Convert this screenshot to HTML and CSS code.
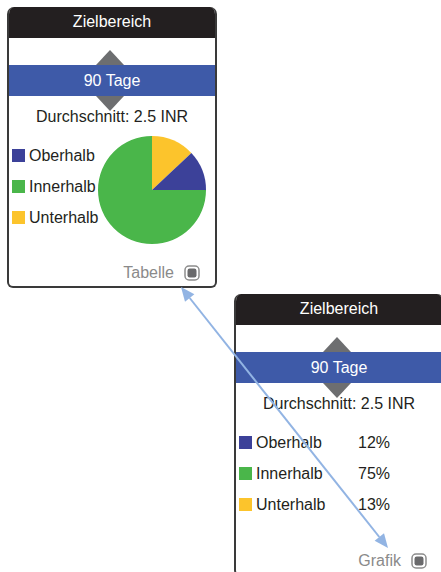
FILE: index.html
```html
<!DOCTYPE html>
<html>
<head>
	<title>Zielbereich</title>
	<link rel="stylesheet" href="styles.css">
</head>
<body>
	<div class="card card-chart">
		<div class="card-head">Zielbereich</div>
		<div class="spinner">
			<div class="tri tri-up"></div>
			<div class="band">90 Tage</div>
			<div class="tri tri-down"></div>
		</div>
		<div class="avg">Durchschnitt: 2.5 INR</div>
		<div class="card-body">
			<div class="legend">
				<div class="row"><span class="swatch above"></span><span class="name">Oberhalb</span></div>
				<div class="row"><span class="swatch inside"></span><span class="name">Innerhalb</span></div>
				<div class="row"><span class="swatch below"></span><span class="name">Unterhalb</span></div>
			</div>
			<svg class="pie" width="108" height="108" viewBox="0 0 108 108">
				<path d="M54 54 L54 0 A54 54 0 0 1 93.37 17.04 Z" fill="#fcc42c"/>
				<path d="M54 54 L93.37 17.04 A54 54 0 0 1 108 54 Z" fill="#3c4199"/>
				<path d="M54 54 L108 54 A54 54 0 1 1 54 0 Z" fill="#4ab64a"/>
			</svg>
		</div>
		<div class="card-foot">
			<span class="switch-label">Tabelle</span>
			<svg class="switch" width="16" height="16" viewBox="0 0 16 16">
				<rect x="1" y="1" width="14" height="14" rx="4" fill="#fff" stroke="#8c8c8c" stroke-width="1.5"/>
				<rect x="3.5" y="3.5" width="9" height="9" rx="2.2" fill="#6a6a6c"/>
			</svg>
		</div>
	</div>

	<div class="card card-table">
		<div class="card-head">Zielbereich</div>
		<div class="spinner">
			<div class="tri tri-up"></div>
			<div class="band">90 Tage</div>
			<div class="tri tri-down"></div>
		</div>
		<div class="avg">Durchschnitt: 2.5 INR</div>
		<div class="card-body">
			<div class="legend">
				<div class="row"><span class="swatch above"></span><span class="name">Oberhalb</span><span class="pct">12%</span></div>
				<div class="row"><span class="swatch inside"></span><span class="name">Innerhalb</span><span class="pct">75%</span></div>
				<div class="row"><span class="swatch below"></span><span class="name">Unterhalb</span><span class="pct">13%</span></div>
			</div>
		</div>
		<div class="card-foot">
			<span class="switch-label">Grafik</span>
			<svg class="switch" width="16" height="16" viewBox="0 0 16 16">
				<rect x="1" y="1" width="14" height="14" rx="4" fill="#fff" stroke="#8c8c8c" stroke-width="1.5"/>
				<rect x="3.5" y="3.5" width="9" height="9" rx="2.2" fill="#6a6a6c"/>
			</svg>
		</div>
	</div>

	<!-- Verbindung zwischen den beiden Ansichten -->
	<svg class="link" width="441" height="572" viewBox="0 0 441 572">
		<line x1="189.7" y1="298" x2="379.3" y2="537" stroke="#92b4e3" stroke-width="2"/>
		<polygon points="181,287 185,301.7 194.4,294.3" fill="#92b4e3"/>
		<polygon points="388,548 374.6,540.7 384,533.3" fill="#92b4e3"/>
	</svg>
</body>
</html>
```

FILE: styles.css
```css
html, body {
	margin: 0;
	overflow: hidden;
}
body {
	position: relative;
	width: 441px;
	height: 572px;
	background: #fff;
	font-family: "Liberation Sans", Arial, sans-serif;
	font-size: 16px;
	color: #231f20;
}

.card {
	box-sizing: border-box;
	width: 210px;
	height: 281px;
	border: 2px solid #3a3a3a;
	border-top: 0;
	border-radius: 7px 7px 6px 6px;
	overflow: hidden;
	display: flex;
	flex-direction: column;
	background: #fff;
}
.card-chart {
	margin: 7px 0 0 7px;
}
.card-table {
	margin: 6px 0 0 234px;
	height: 282px;
}

.card-head {
	height: 31px;
	line-height: 30px;
	margin: 0 -2px;
	background: #231f20;
	color: #fff;
	text-align: center;
}

.spinner {
	margin-top: 12px;
	display: flex;
	flex-direction: column;
	align-items: center;
}
.tri {
	width: 0;
	height: 0;
	border-left: 14px solid transparent;
	border-right: 14px solid transparent;
	margin-left: -4px;
}
.tri-up {
	border-bottom: 15px solid #6d6e70;
}
.tri-down {
	border-top: 15px solid #6d6e70;
}
.band {
	align-self: stretch;
	margin: 0 -2px;
	height: 31px;
	line-height: 31px;
	background: #3e5aa8;
	color: #fff;
	text-align: center;
}

.avg {
	margin-top: -3px;
	line-height: 18px;
	text-align: center;
}

.card-body {
	margin-top: 10px;
	display: flex;
	height: 110px;
}
.legend {
	padding: 4px 0 0 3px;
}
.row {
	display: flex;
	align-items: center;
	height: 31px;
}
.swatch {
	width: 13px;
	height: 13px;
	margin-right: 4px;
}
.above { background: #3c4199; }
.inside { background: #4ab64a; }
.below { background: #fcc42c; }
.card-table .name {
	width: 102px;
}
.pie {
	flex-shrink: 0;
	margin-left: auto;
	margin-right: 9px;
}

.card-foot {
	margin-top: auto;
	padding: 0 15px 4px 0;
	display: flex;
	justify-content: flex-end;
	align-items: center;
	height: 18px;
}
.switch-label {
	color: #8a8a8a;
	margin-right: 10px;
}

.link {
	position: absolute;
	left: 0;
	top: 0;
}
```
